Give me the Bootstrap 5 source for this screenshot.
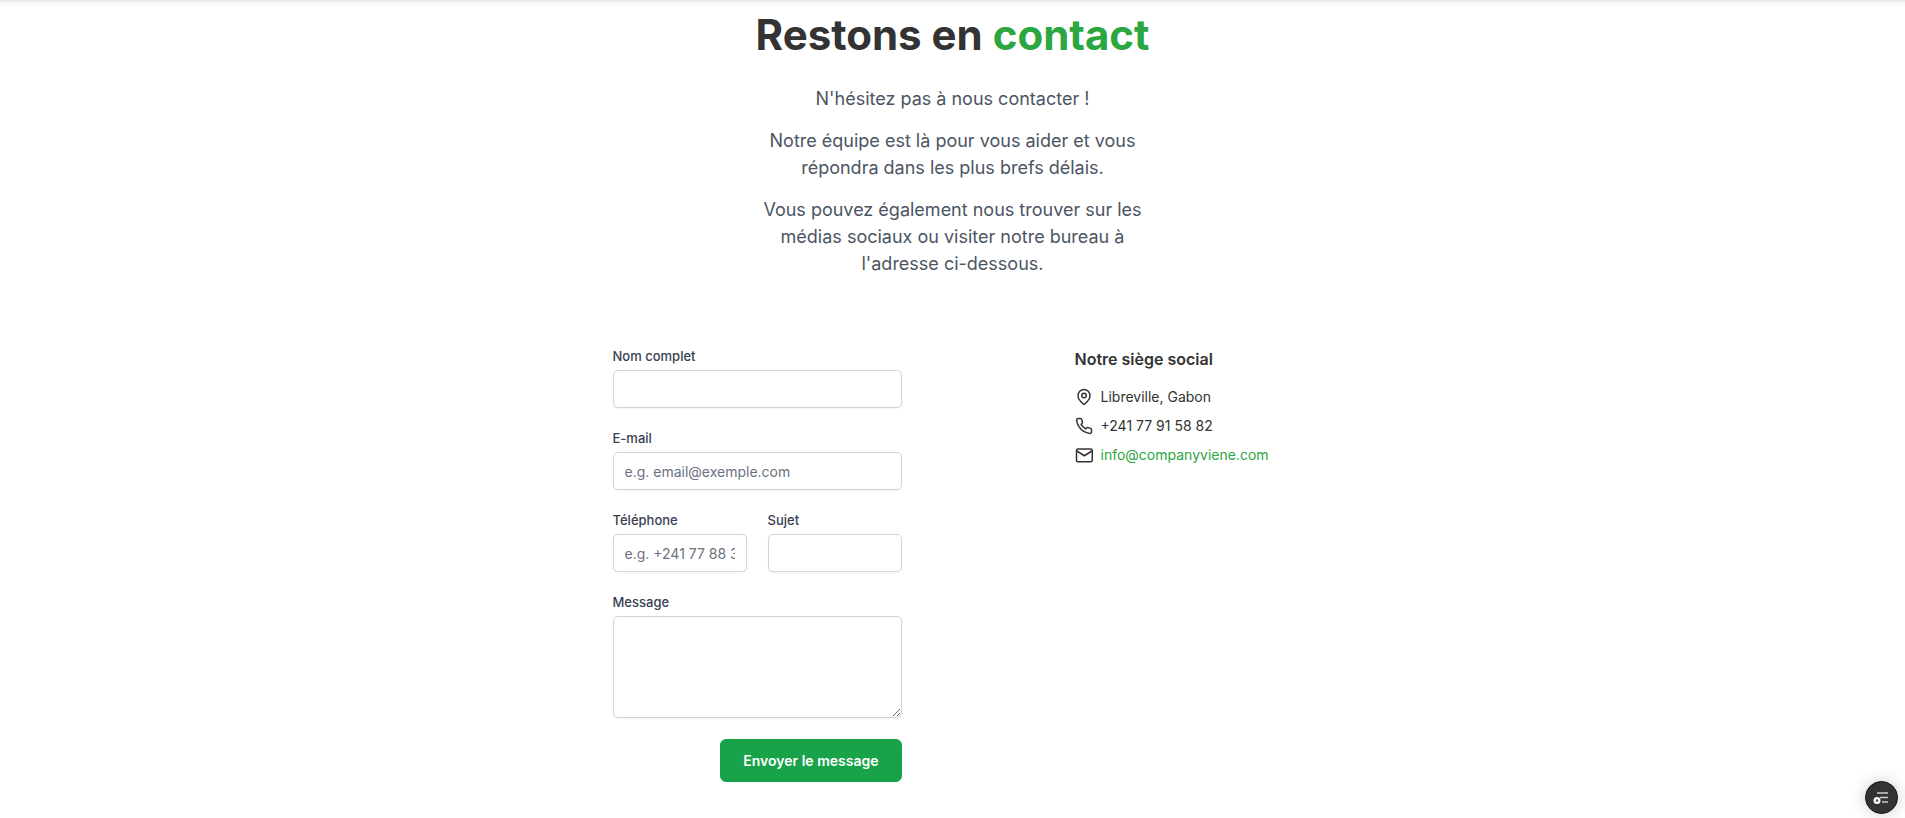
<!DOCTYPE html>
<html lang="fr">
<head>
<meta charset="utf-8">
<meta name="viewport" content="width=device-width, initial-scale=1">
<title>Restons en contact</title>
<link rel="stylesheet" href="https://cdn.jsdelivr.net/npm/bootstrap@5.3.0/dist/css/bootstrap.min.css">
<style>
  body { font-family: Inter, "Liberation Sans", sans-serif; font-size: 14px; line-height: 22px; color: #333; background: #fff; }
  .top-shade { height: 8px; background: linear-gradient(#e4e4e2, #f8f8f7 40%, #fff); }
  .page-title { font-size: 42px; line-height: 53px; font-weight: 700; color: #333; }
  .brand-green { color: #2ba640; }
  .intro { max-width: 403px; font-size: 18px; line-height: 27px; color: #4b5563; }
  .intro p { margin-bottom: 15px; }
  .contact-area { max-width: 680px; column-gap: 173px; margin-top: 70px; }
  .contact-form { width: 289px; display: grid; row-gap: 21px; }
  .form-label { display: block; font-size: 13px; line-height: 18px; font-weight: 500; color: #374151; margin-bottom: 5px; }
  .form-control { height: 38px; padding: 7px 11px; font-size: 14px; line-height: 22px; border-color: #d1d5db; border-radius: 5px; box-shadow: 0 1px 2px rgba(0,0,0,.05); }
  .form-control::placeholder { color: #6b7280; }
  textarea.form-control { height: 102px; }
  .field-pair { display: grid; grid-template-columns: 1fr 1fr; column-gap: 21px; }
  .btn-send { --bs-btn-color: #fff; --bs-btn-bg: #18a34a; --bs-btn-border-color: #18a34a; --bs-btn-hover-color: #fff; --bs-btn-hover-bg: #15803d; --bs-btn-hover-border-color: #15803d; --bs-btn-font-size: 14px; --bs-btn-font-weight: 600; --bs-btn-line-height: 21px; --bs-btn-padding-x: 22px; --bs-btn-padding-y: 10px; --bs-btn-border-radius: 6px; }
  .office-title { font-size: 16px; line-height: 24px; font-weight: 600; margin-bottom: 15px; }
  .office-list { display: grid; row-gap: 7px; }
  .office-list svg { width: 18px; height: 18px; flex: none; }
  .float-toggle { right: 7px; bottom: 4px; width: 33px; height: 33px; background: #333; border: 1px solid #111; box-shadow: 0 0 16px rgba(0,0,0,.2); }
</style>
</head>
<body>
<div class="top-shade"></div>
<main class="container-fluid">
  <header class="text-center">
    <h1 class="page-title mb-0">Restons en <span class="brand-green">contact</span></h1>
    <div class="intro mx-auto pt-4">
      <p>N'hésitez pas à nous contacter !</p>
      <p>Notre équipe est là pour vous aider et vous répondra dans les plus brefs délais.</p>
      <p>Vous pouvez également nous trouver sur les médias sociaux ou visiter notre bureau à l'adresse ci-dessous.</p>
    </div>
  </header>
  <div class="contact-area d-flex flex-wrap flex-md-nowrap mx-auto">
    <form class="contact-form">
      <div>
        <label class="form-label" for="name">Nom complet</label>
        <input class="form-control" type="text" id="name">
      </div>
      <div>
        <label class="form-label" for="email">E-mail</label>
        <input class="form-control" type="email" id="email" placeholder="e.g. email@exemple.com">
      </div>
      <div class="field-pair">
        <div>
          <label class="form-label" for="phone">Téléphone</label>
          <input class="form-control" type="tel" id="phone" placeholder="e.g. +241 77 88 32 10">
        </div>
        <div>
          <label class="form-label" for="subject">Sujet</label>
          <input class="form-control" type="text" id="subject">
        </div>
      </div>
      <div>
        <label class="form-label" for="message">Message</label>
        <textarea class="form-control d-block" id="message"></textarea>
      </div>
      <button class="btn btn-send ms-auto" type="submit">Envoyer le message</button>
    </form>
    <section>
      <h2 class="office-title">Notre siège social</h2>
      <div class="office-list">
        <div class="d-flex align-items-center gap-2">
          <svg viewBox="0 0 24 24" fill="none" stroke="currentColor" stroke-width="2" stroke-linecap="round" stroke-linejoin="round"><path d="M20 10c0 6-8 12-8 12s-8-6-8-12a8 8 0 0 1 16 0z"/><circle cx="12" cy="10" r="3"/></svg>
          <span>Libreville, Gabon</span>
        </div>
        <div class="d-flex align-items-center gap-2">
          <svg viewBox="0 0 24 24" fill="none" stroke="currentColor" stroke-width="2" stroke-linecap="round" stroke-linejoin="round"><path d="M22 16.92v3a2 2 0 0 1-2.18 2 19.8 19.8 0 0 1-8.63-3.07 19.5 19.5 0 0 1-6-6A19.8 19.8 0 0 1 2.12 4.18 2 2 0 0 1 4.11 2h3a2 2 0 0 1 2 1.72c.13.96.36 1.9.7 2.81a2 2 0 0 1-.45 2.11L8.09 9.91a16 16 0 0 0 6 6l1.27-1.27a2 2 0 0 1 2.11-.45c.91.34 1.85.57 2.81.7A2 2 0 0 1 22 16.92z"/></svg>
          <span>+241 77 91 58 82</span>
        </div>
        <div class="d-flex align-items-center gap-2">
          <svg viewBox="0 0 24 24" fill="none" stroke="currentColor" stroke-width="2" stroke-linecap="round" stroke-linejoin="round"><rect x="2" y="4" width="21" height="17" rx="2"/><path d="m3 7 9.5 6L22 7"/></svg>
          <a class="brand-green text-decoration-none" href="mailto:info@companyviene.com">info@companyviene.com</a>
        </div>
      </div>
    </section>
  </div>
</main>
<button class="float-toggle position-fixed rounded-circle p-0 d-flex align-items-center justify-content-center" type="button" aria-label="Menu">
  <svg width="20" height="20" viewBox="0 0 20 20"><path d="M5 5h11M8 9.500h8M10 14h6" stroke="#ccc" stroke-width="1.5"/><circle cx="5" cy="12.5" r="3.5" fill="#fff"/><path d="m5 10.500 1.500 3h-3z" fill="#333"/></svg>
</button>
<script src="https://cdn.jsdelivr.net/npm/bootstrap@5.3.0/dist/js/bootstrap.bundle.min.js"></script>
</body>
</html>
